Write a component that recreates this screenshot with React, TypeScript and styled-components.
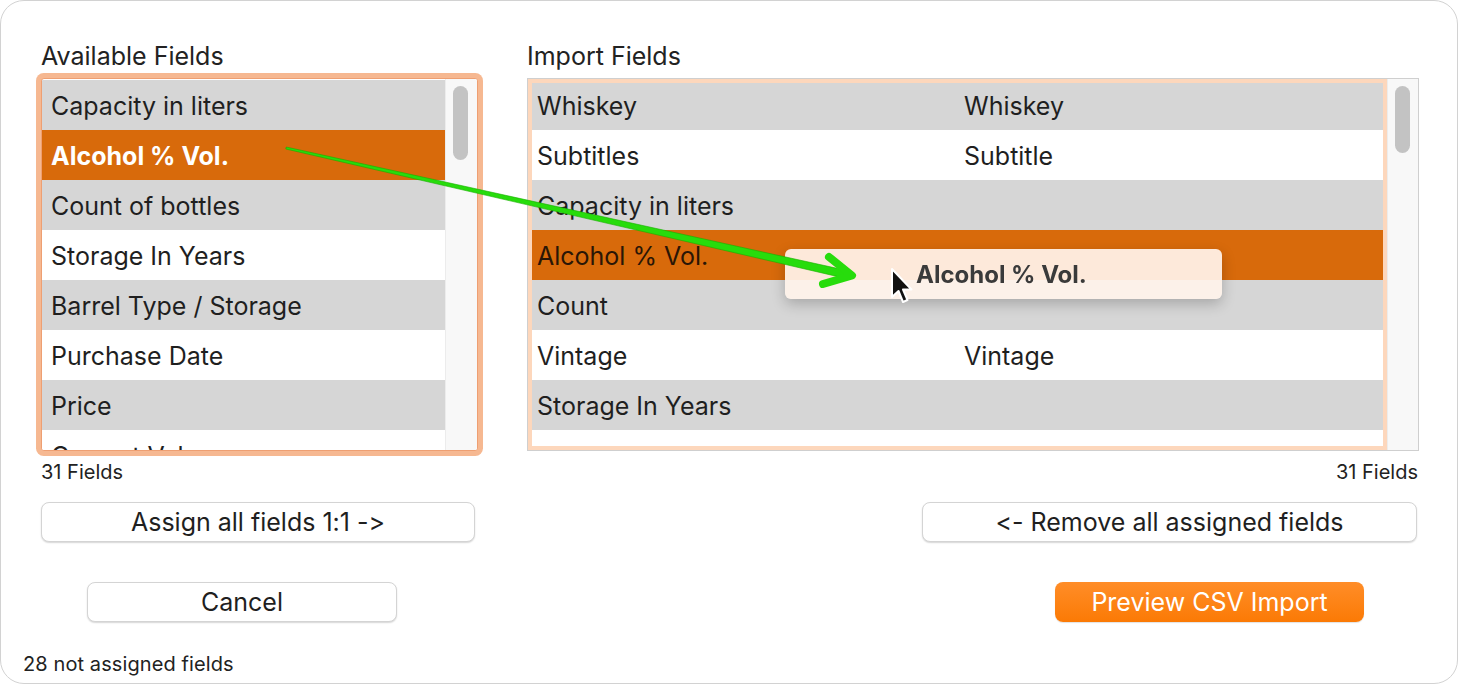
import React from 'react';
import styled, { createGlobalStyle } from 'styled-components';

const GlobalStyle = createGlobalStyle`
  html, body {
    margin: 0;
    padding: 0;
    background: #ffffff;
  }
  body {
    font-family: Inter, "Noto Sans", "Liberation Sans", sans-serif;
    font-feature-settings: "calt" 0, "liga" 0;
    color: #1f1f1f;
  }
  button {
    font-feature-settings: "calt" 0, "liga" 0;
  }
`;

const Window = styled.div`
  position: relative;
  box-sizing: border-box;
  width: 1458px;
  height: 684px;
  border: 1px solid #d2d2d2;
  border-radius: 24px;
  background: #fff;
  padding-top: 40px;
  overflow: hidden;
`;

const Columns = styled.div`
  display: grid;
  grid-template-columns: 437px 892px;
  column-gap: 49px;
  padding: 0 40px;
`;

const Column = styled.div`
  display: flex;
  flex-direction: column;
`;

const Label = styled.div`
  font-size: 25px;
  line-height: 30px;
  margin-bottom: 7px;
  color: #222;
`;

const ListBox = styled.div<{ $focused?: boolean }>`
  position: relative;
  box-sizing: border-box;
  height: 373px;
  display: flex;
  border: 1px solid ${(p) => (p.$focused ? '#ee9f72' : '#cfcfcf')};
  border-radius: ${(p) => (p.$focused ? '3px' : '0')};
  box-shadow: ${(p) => (p.$focused ? '0 0 0 5px #f6b891' : 'none')};
  background: #fff;
  overflow: hidden;
`;

const Rows = styled.div<{ $dropTarget?: boolean }>`
  position: relative;
  flex: 1;
  padding-top: 1px;
  overflow: hidden;
  ${(p) =>
    p.$dropTarget &&
    `
    &::after {
      content: '';
      position: absolute;
      inset: 0;
      border: 4px solid #fdd7bc;
      pointer-events: none;
    }
  `}
`;

const Row = styled.div<{ $shade: 'gray' | 'white' | 'selected' | 'target' }>`
  box-sizing: border-box;
  display: grid;
  grid-template-columns: 427px 1fr;
  height: 50px;
  align-items: center;
  padding: 2px 0 0 9px;
  font-size: 25px;
  white-space: nowrap;
  background: ${(p) =>
    p.$shade === 'gray'
      ? '#d6d6d6'
      : p.$shade === 'white'
      ? '#ffffff'
      : '#d86a0b'};
  color: ${(p) =>
    p.$shade === 'selected' ? '#ffffff' : p.$shade === 'target' ? '#2a1606' : '#1f1f1f'};
  font-weight: ${(p) => (p.$shade === 'selected' ? 700 : 400)};
`;

const Scrollbar = styled.div<{ $width: number }>`
  width: ${(p) => p.$width}px;
  flex: none;
  background: #f8f8f8;
  border-left: 1px solid #ececec;
  box-sizing: border-box;
  padding: 7px 0 0 7px;
`;

const Thumb = styled.div<{ $height: number }>`
  width: 15px;
  height: ${(p) => p.$height}px;
  border-radius: 8px;
  background: #c3c3c3;
`;

const Count = styled.div<{ $right?: boolean }>`
  margin-top: 9px;
  margin-right: ${(p) => (p.$right ? 1 : 0)}px;
  font-size: 20px;
  line-height: 24px;
  text-align: ${(p) => (p.$right ? 'right' : 'left')};
  color: #222;
`;

const Button = styled.button<{ $width: number; $offset?: number; $right?: boolean; $primary?: boolean }>`
  box-sizing: border-box;
  width: ${(p) => p.$width}px;
  height: 40px;
  align-self: ${(p) => (p.$right ? 'flex-end' : 'flex-start')};
  margin-left: ${(p) => (p.$right ? 0 : p.$offset || 0)}px;
  margin-right: ${(p) => (p.$right ? p.$offset || 0 : 0)}px;
  padding: 0;
  font-family: inherit;
  font-size: 25px;
  border-radius: 8px;
  cursor: default;
  color: ${(p) => (p.$primary ? '#ffffff' : '#1f1f1f')};
  border: ${(p) => (p.$primary ? 'none' : '1px solid #d4d4d4')};
  background: ${(p) =>
    p.$primary ? 'linear-gradient(#ff8d28, #fb7a05)' : '#ffffff'};
  box-shadow: ${(p) =>
    p.$primary ? '0 1px 1px rgba(0,0,0,0.12)' : '0 1px 1.5px rgba(0,0,0,0.16)'};
`;

const ActionRow = styled.div`
  display: flex;
  flex-direction: column;
  margin-top: 18px;
  gap: 40px;
`;

const Footer = styled.div`
  margin-top: 30px;
  padding-left: 22px;
  font-size: 20px;
  line-height: 24px;
  letter-spacing: 0.1px;
  color: #222;
`;

const Overlay = styled.svg`
  position: absolute;
  left: 0;
  top: 0;
  width: 1458px;
  height: 684px;
  pointer-events: none;
`;

const DragGhost = styled.div`
  position: absolute;
  left: 784px;
  top: 248px;
  width: 437px;
  height: 50px;
  box-sizing: border-box;
  padding-left: 131px;
  display: flex;
  align-items: center;
  border-radius: 6px;
  background: rgba(255, 243, 235, 0.93);
  box-shadow: 0 5px 14px rgba(0, 0, 0, 0.22);
  font-size: 24px;
  font-weight: 700;
  color: #3a3a3a;
  filter: blur(0.3px);
`;

const Cursor = styled.svg`
  position: absolute;
  left: 888px;
  top: 266px;
  width: 26px;
  height: 42px;
`;

type Shade = 'gray' | 'white' | 'selected' | 'target';

const available: [string, Shade][] = [
  ['Capacity in liters', 'gray'],
  ['Alcohol % Vol.', 'selected'],
  ['Count of bottles', 'gray'],
  ['Storage In Years', 'white'],
  ['Barrel Type / Storage', 'gray'],
  ['Purchase Date', 'white'],
  ['Price', 'gray'],
  ['Current Value', 'white'],
];

const imported: [string, string, Shade][] = [
  ['Whiskey', 'Whiskey', 'gray'],
  ['Subtitles', 'Subtitle', 'white'],
  ['Capacity in liters', '', 'gray'],
  ['Alcohol % Vol.', '', 'target'],
  ['Count', '', 'gray'],
  ['Vintage', 'Vintage', 'white'],
  ['Storage In Years', '', 'gray'],
  ['Purchase Date', '', 'white'],
];

export default function App() {
  return (
    <>
      <GlobalStyle />
      <Window>
        <Columns>
          <Column>
            <Label>Available Fields</Label>
            <ListBox $focused>
              <Rows>
                {available.map(([name, shade]) => (
                  <Row key={name} $shade={shade}>
                    <span>{name}</span>
                  </Row>
                ))}
              </Rows>
              <Scrollbar $width={32}>
                <Thumb $height={74} />
              </Scrollbar>
            </ListBox>
            <Count>31 Fields</Count>
            <ActionRow>
              <Button $width={434}>Assign all fields 1:1 -&gt;</Button>
              <Button $width={310} $offset={46}>Cancel</Button>
            </ActionRow>
          </Column>

          <Column>
            <Label>Import Fields</Label>
            <ListBox>
              <Rows $dropTarget>
                {imported.map(([name, target, shade]) => (
                  <Row key={name} $shade={shade}>
                    <span>{name}</span>
                    <span>{target}</span>
                  </Row>
                ))}
              </Rows>
              <Scrollbar $width={31}>
                <Thumb $height={67} />
              </Scrollbar>
            </ListBox>
            <Count $right>31 Fields</Count>
            <ActionRow>
              <Button $width={495} $right $offset={2}>&lt;- Remove all assigned fields</Button>
              <Button $width={309} $right $offset={55} $primary>
                Preview CSV Import
              </Button>
            </ActionRow>
          </Column>
        </Columns>
        <Footer>28 not assigned fields</Footer>

        <DragGhost>Alcohol % Vol.</DragGhost>
        <Cursor viewBox="0 0 26 42">
          <path
            d="M3 2 L3 30 L9.5 24 L14 35 L18.5 33 L14 22.5 L22.5 22.5 Z"
            fill="#111"
            stroke="#fff"
            strokeWidth="2"
            strokeLinejoin="round"
          />
        </Cursor>
        <Overlay viewBox="0 0 1458 684">
          <polygon
            points="284.8,148 285.2,146 846.4,269.6 844.6,277.4"
            fill="#27dc0c"
            stroke="#1aae00"
            strokeWidth="0.6"
          />
          <polyline
            points="828,256 851,274.5 822,283"
            fill="none"
            stroke="#27dc0c"
            strokeWidth="8"
            strokeLinecap="round"
            strokeLinejoin="round"
          />
        </Overlay>
      </Window>
    </>
  );
}
